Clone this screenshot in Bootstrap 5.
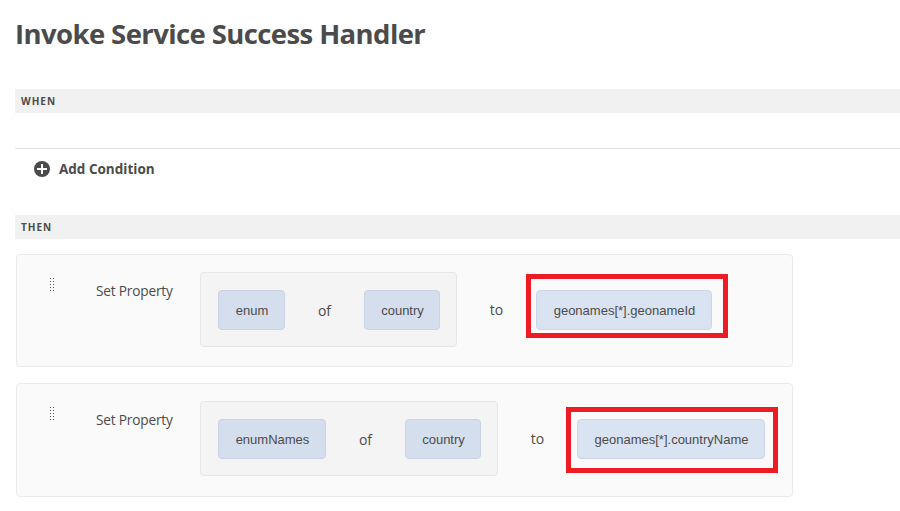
<!DOCTYPE html>
<html lang="en">
<head>
<meta charset="utf-8">
<title>Invoke Service Success Handler</title>
<link href="https://cdn.jsdelivr.net/npm/bootstrap@5.3.0/dist/css/bootstrap.min.css" rel="stylesheet">
<style>
body{font:14px/20px "Open Sans","Noto Sans",sans-serif;color:#4b4b4b;background:#fff;overflow:hidden}
.page{padding-left:15px;height:511px}
.title{font-size:27.5px;line-height:38px;letter-spacing:-.6px;padding-top:15px;height:89px}
.section-bar{height:24px;background:#f1f1f1;font-size:10px;letter-spacing:1px;padding-left:6px}
.conditions{height:67px;margin-top:35px;border-top:1px solid #e1e1e1;padding:11px 0 0 19px}
.add-icon{margin-top:1px}
.add-label{font-size:13.5px;letter-spacing:0;margin:-1px 0 0 9px}
.rule{width:777px;height:113px;border:1px solid #eaeaea;border-radius:4px;background:#fafafa;margin:15px 0 0 1px;padding-top:17px}
.rule+.rule{height:114px;margin-top:16px}
.grip{margin:6px 0 0 33px}
.action{width:104px;margin:9px 0 0 42px;font-size:13.7px;letter-spacing:-.2px}
.group{height:75px;border:1px solid #e6e6e6;border-radius:4px;background:#f4f4f4;padding:0 16px 0 17px}
.token{height:40px;padding:1px 0 0 1px;font:13px/38px "Liberation Sans",sans-serif;color:#4b4b4b;background:#d5deec;border:1px solid #c8d3e5;border-radius:4px;text-align:center;white-space:nowrap}
.token-value{background:#dae3f1;border-color:#cbd7e9}
.w-enum{width:67px}.w-names{width:108px}.w-country{width:76px}.w-id{width:176px}.w-cname{width:188px}
.of{width:79px;text-align:center;padding-top:2px}
.to{width:79px;text-align:center;padding-top:28px}
.slot{position:relative;padding-top:18px}
.marker{position:absolute;border:5px solid #ed1c24;pointer-events:none}
.marker-a{left:-10px;top:2px;width:202px;height:64px}
.marker-b{left:-11px;top:6px;width:212px;height:66px}
</style>
<script src="https://cdn.jsdelivr.net/npm/bootstrap@5.3.0/dist/js/bootstrap.bundle.min.js"></script>
</head>
<body>
<main class="page">
  <h1 class="title fw-bold m-0">Invoke Service Success Handler</h1>
  <div class="section-bar d-flex align-items-center fw-bold">WHEN</div>
  <div class="conditions d-flex align-items-start">
    <svg class="add-icon flex-shrink-0" width="16" height="16" viewBox="0 0 16 16"><circle cx="8" cy="8" r="8" fill="#4b4b4b"/><path d="M8 3v10M3 8h10" stroke="#fff" stroke-width="2"/></svg>
    <span class="add-label fw-bold">Add Condition</span>
  </div>
  <div class="section-bar d-flex align-items-center fw-bold">THEN</div>

  <section class="rule d-flex align-items-start">
    <svg class="grip flex-shrink-0" width="4" height="13" shape-rendering="crispEdges"><path d="M.5 0v13M3.5 0v13" stroke="#4b4b4b" stroke-dasharray="1 2"/></svg>
    <span class="action">Set Property</span>
    <div class="group d-flex align-items-center">
      <div class="token w-enum">enum</div><span class="of">of</span><div class="token w-country">country</div>
    </div>
    <span class="to">to</span>
    <div class="slot"><div class="token token-value w-id">geonames[*].geonameId</div><div class="marker marker-a"></div></div>
  </section>

  <section class="rule d-flex align-items-start">
    <svg class="grip flex-shrink-0" width="4" height="13" shape-rendering="crispEdges"><path d="M.5 0v13M3.5 0v13" stroke="#4b4b4b" stroke-dasharray="1 2"/></svg>
    <span class="action">Set Property</span>
    <div class="group d-flex align-items-center">
      <div class="token w-names">enumNames</div><span class="of">of</span><div class="token w-country">country</div>
    </div>
    <span class="to">to</span>
    <div class="slot"><div class="token token-value w-cname">geonames[*].countryName</div><div class="marker marker-b"></div></div>
  </section>
</main>
</body>
</html>
